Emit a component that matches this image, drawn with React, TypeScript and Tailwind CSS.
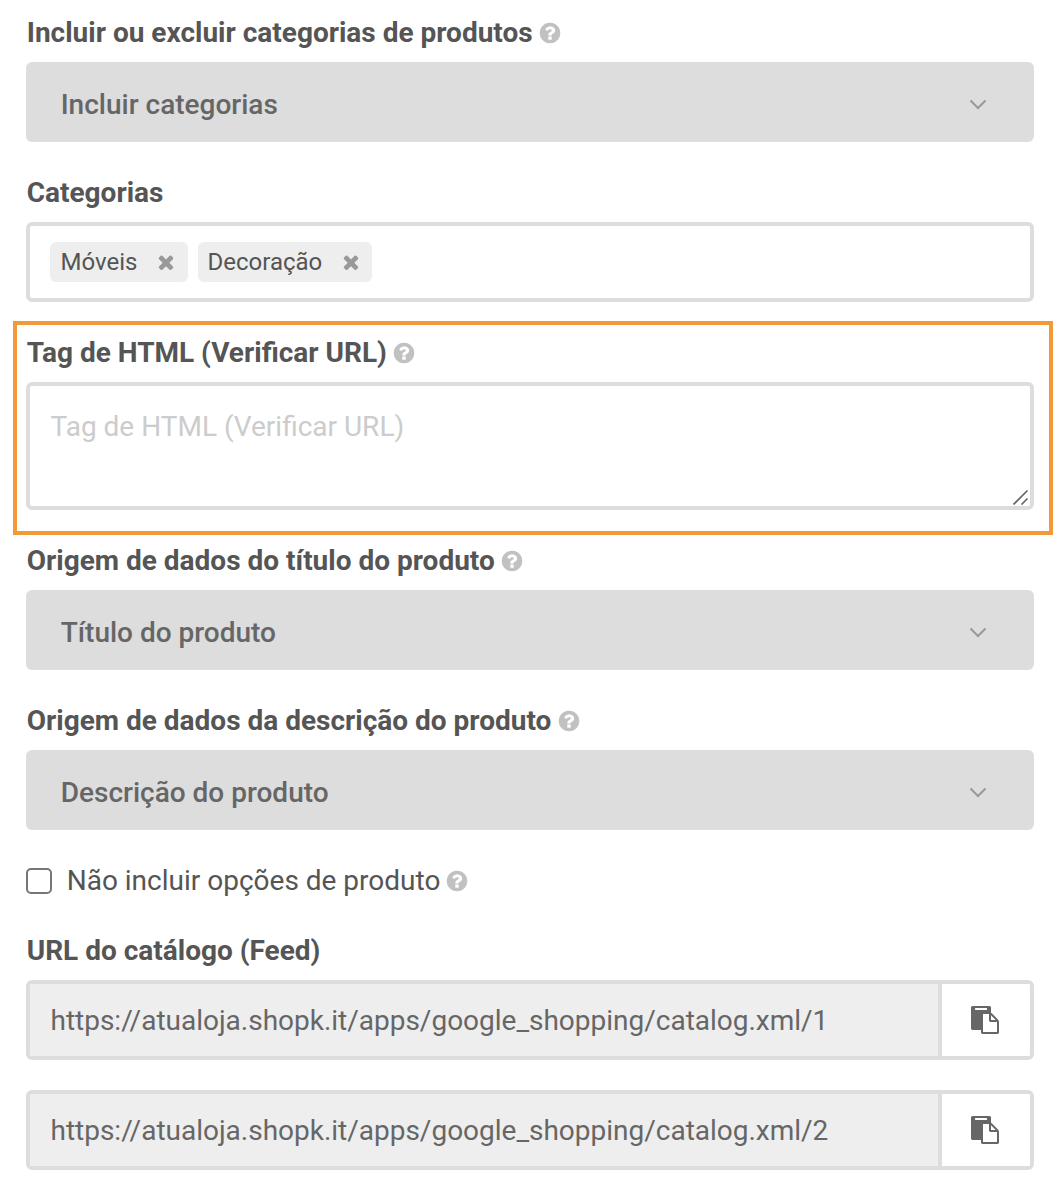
import React from "react";

function HelpIcon() {
  return (
    <svg viewBox="0 0 1792 1792" className="-mt-px -ml-px h-6 w-6 shrink-0 fill-[#c1c1c1]" aria-hidden="true">
      <path d="M1024 1376v-192q0-14-9-23t-23-9h-192q-14 0-23 9t-9 23v192q0 14 9 23t23 9h192q14 0 23-9t9-23zm256-672q0-88-55.5-163t-138.5-116-170-41q-243 0-371 213-15 24 8 42l132 100q7 6 19 6 16 0 25-12 53-68 86-92 34-24 86-24 48 0 85.5 26t37.5 59q0 38-20 61t-68 45q-63 28-115.5 86.5t-52.5 125.5v36q0 14 9 23t23 9h192q14 0 23-9t9-23q0-19 21.5-49.5t54.5-49.5q32-18 49-28.5t46-35 44.5-48 28-60.5 12.5-81zm384 192q0 209-103 385.5t-279.5 279.5-385.5 103-385.5-103-279.5-279.5-103-385.5 103-385.5 279.5-279.5 385.5-103 385.5 103 279.5 279.5 103 385.5z" />
    </svg>
  );
}

function TimesIcon() {
  return (
    <svg viewBox="0 0 1792 1792" className="-mt-px h-[22px] w-[22px] shrink-0 fill-[#999]" aria-hidden="true">
      <path d="M1490 1322q0 40-28 68l-136 136q-28 28-68 28t-68-28l-294-294-294 294q-28 28-68 28t-68-28l-136-136q-28-28-28-68t28-68l294-294-294-294q-28-28-28-68t28-68l136-136q28-28 68-28t68 28l294 294 294-294q28-28 68-28t68 28l136 136q28 28 28 68t-28 68l-294 294 294 294q28 28 28 68z" />
    </svg>
  );
}

function PasteIcon() {
  return (
    <svg viewBox="0 0 1792 1792" className="mr-0.5 h-7 w-7 fill-[#666]" aria-hidden="true">
      <path d="M768 1664h896v-640h-416q-40 0-68-28t-28-68v-416h-384v1152zm256-1440v-64q0-13-9.5-22.5t-22.5-9.5h-704q-13 0-22.5 9.5t-9.5 22.5v64q0 13 9.5 22.5t22.5 9.5h704q13 0 22.5-9.5t9.5-22.5zm256 672h299l-299-299v299zm512 128v672q0 40-28 68t-68 28h-960q-40 0-68-28t-28-68v-160h-544q-40 0-68-28t-28-68v-1344q0-40 28-68t68-28h1088q40 0 68 28t28 68v328q21 13 36 28l408 408q28 28 48 76t20 88z" />
    </svg>
  );
}

function Label({ text, help = false }: { text: string; help?: boolean }) {
  return (
    <div className="flex h-10 items-center gap-[6.5px] pt-0.5 pl-[0.7px] text-[28px] leading-10 font-bold whitespace-nowrap">
      <span>{text}</span>
      {help && <HelpIcon />}
    </div>
  );
}

function Select({ value }: { value: string }) {
  return (
    <button
      type="button"
      className="mt-[10px] flex h-20 w-full items-center justify-between rounded-md bg-[#ddd] pr-[47px] pl-[34.7px] text-[28px] leading-10 font-medium text-[#666]"
    >
      <span className="mt-1.5">{value}</span>
      <svg viewBox="0 0 18 12" className="mt-1.5 h-3 w-[18px] fill-none stroke-[#999] stroke-2" aria-hidden="true">
        <path d="M1.5 1.5 9 9l7.500-7.500" />
      </svg>
    </button>
  );
}

function Tag({ text, className }: { text: string; className: string }) {
  return (
    <span className={`flex h-10 items-center justify-between rounded-md bg-[#eee] text-2xl leading-10 ${className}`}>
      <span>{text}</span>
      <TimesIcon />
    </span>
  );
}

function FeedUrl({ url }: { url: string }) {
  return (
    <div className="flex h-20 items-stretch overflow-hidden rounded-md border-4 border-[#ddd]">
      <div className="flex flex-1 items-center bg-[#eee] pt-0.5 pl-[20.5px] text-[28px] tracking-[-0.01px] text-[#666]">{url}</div>
      <button type="button" aria-label="Copiar" className="flex w-[92px] items-center justify-center border-l-4 border-[#ddd] bg-white">
        <PasteIcon />
      </button>
    </div>
  );
}

export default function App() {
  return (
    <main className="h-[1196px] w-[1060px] overflow-hidden bg-white pt-3 font-['Roboto',sans-serif] text-[#555]">
      <section className="mx-[26px]">
        <Label text="Incluir ou excluir categorias de produtos" help />
        <Select value="Incluir categorias" />
      </section>

      <section className="mx-[26px] mt-[30px]">
        <Label text="Categorias" />
        <div className="mt-[10px] flex h-20 items-center gap-[10px] rounded-md border-4 border-[#ddd] px-5">
          <Tag text="Móveis" className="w-[138px] pr-[11px] pl-[10.5px]" />
          <Tag text="Decoração" className="w-[174px] pr-[10px] pl-[9.5px]" />
        </div>
      </section>

      <section className="mt-[19px] ml-[13px] h-[214px] w-[1040px] border-4 border-[#f29a38] pt-[7px] pr-[15px] pl-[9px]">
        <Label text="Tag de HTML (Verificar URL)" help />
        <div className="relative mt-[10px] h-32 rounded-md border-4 border-[#ddd] pt-[21px] pl-[20.5px]">
          <p className="text-[28px] leading-10 text-[#ccc]">Tag de HTML (Verificar URL)</p>
          <svg viewBox="0 0 16 16" className="absolute right-px bottom-px h-4 w-4 fill-none stroke-[#666] stroke-[1.7]" aria-hidden="true">
            <path d="M.5 15.5 14.500 1.500M8.500 15.500l6-6" />
          </svg>
        </div>
      </section>

      <section className="mx-[26px] mt-[5px]">
        <Label text="Origem de dados do título do produto" help />
        <Select value="Título do produto" />
      </section>

      <section className="mx-[26px] mt-[30px]">
        <Label text="Origem de dados da descrição do produto" help />
        <Select value="Descrição do produto" />
      </section>

      <div className="mx-[26px] mt-[30px] flex h-10 items-center pt-0.5 text-[28px] leading-10">
        <span role="checkbox" aria-checked="false" className="h-[26px] w-[26px] rounded-[5px] border-2 border-[#767676]" />
        <span className="mr-1.5 ml-[14.7px]">Não incluir opções de produto</span>
        <HelpIcon />
      </div>

      <section className="mx-[26px] mt-[30px]">
        <Label text="URL do catálogo (Feed)" />
        <div className="mt-[10px] flex flex-col gap-[30px]">
          <FeedUrl url="https://atualoja.shopk.it/apps/google_shopping/catalog.xml/1" />
          <FeedUrl url="https://atualoja.shopk.it/apps/google_shopping/catalog.xml/2" />
        </div>
      </section>
    </main>
  );
}
